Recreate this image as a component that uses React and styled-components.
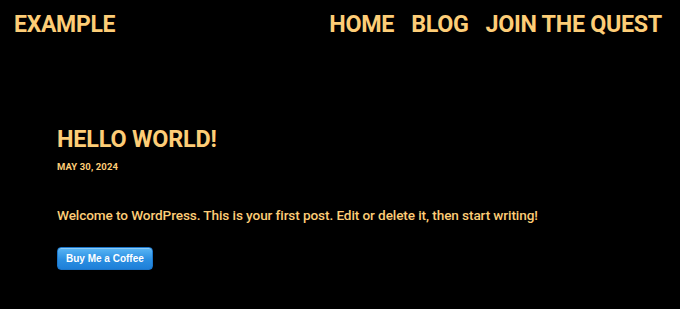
import React from 'react';
import styled, { createGlobalStyle } from 'styled-components';

const GlobalStyle = createGlobalStyle`
  html, body {
    margin: 0;
    padding: 0;
    background: #000;
  }
  body {
    font-family: Roboto, "Noto Sans", sans-serif;
    color: #fdcd77;
  }
`;

const Page = styled.div`
  width: 680px;
  height: 309px;
  background: #000;
  overflow: hidden;
`;

const Header = styled.header`
  display: flex;
  justify-content: space-between;
  align-items: center;
  padding: 10px 18px 0 14px;
`;

const Logo = styled.div`
  font-size: 23px;
  font-weight: 700;
  letter-spacing: -0.3px;
`;

const Nav = styled.nav`
  display: flex;
  gap: 17px;
`;

const NavLink = styled.a`
  font-size: 23.3px;
  font-weight: 700;
  letter-spacing: -0.3px;
  color: inherit;
  text-decoration: none;
`;

const Main = styled.main`
  padding: 86px 0 0 57px;
`;

const Title = styled.h1`
  margin: 0;
  font-size: 23.4px;
  font-weight: 700;
  line-height: 30px;
  letter-spacing: -0.2px;
`;

const PostDate = styled.div`
  margin-top: 7px;
  font-size: 9.5px;
  font-weight: 700;
  letter-spacing: 0.1px;
`;

const Body = styled.p`
  margin: 35px 0 0;
  font-size: 13.6px;
  font-weight: 500;
  letter-spacing: -0.1px;
`;

const CoffeeButton = styled.button`
  margin-top: 24px;
  height: 23px;
  padding: 0 8px;
  border: 1px solid #1b75c9;
  border-radius: 4px;
  background: linear-gradient(#5ab6f5, #2b8fe2 55%, #1e7fd8);
  color: #fff;
  font-family: "Liberation Sans", Arial, sans-serif;
  font-size: 10px;
  font-weight: 700;
  box-shadow: inset 0 1px 0 rgba(255, 255, 255, 0.3);
`;

const App = () => (
  <Page>
    <GlobalStyle />
    <Header>
      <Logo>EXAMPLE</Logo>
      <Nav>
        <NavLink href="#">HOME</NavLink>
        <NavLink href="#">BLOG</NavLink>
        <NavLink href="#">JOIN THE QUEST</NavLink>
      </Nav>
    </Header>
    <Main>
      <Title>HELLO WORLD!</Title>
      <PostDate>MAY 30, 2024</PostDate>
      <Body>Welcome to WordPress. This is your first post. Edit or delete it, then start writing!</Body>
      <CoffeeButton>Buy Me a Coffee</CoffeeButton>
    </Main>
  </Page>
);

export default App;
